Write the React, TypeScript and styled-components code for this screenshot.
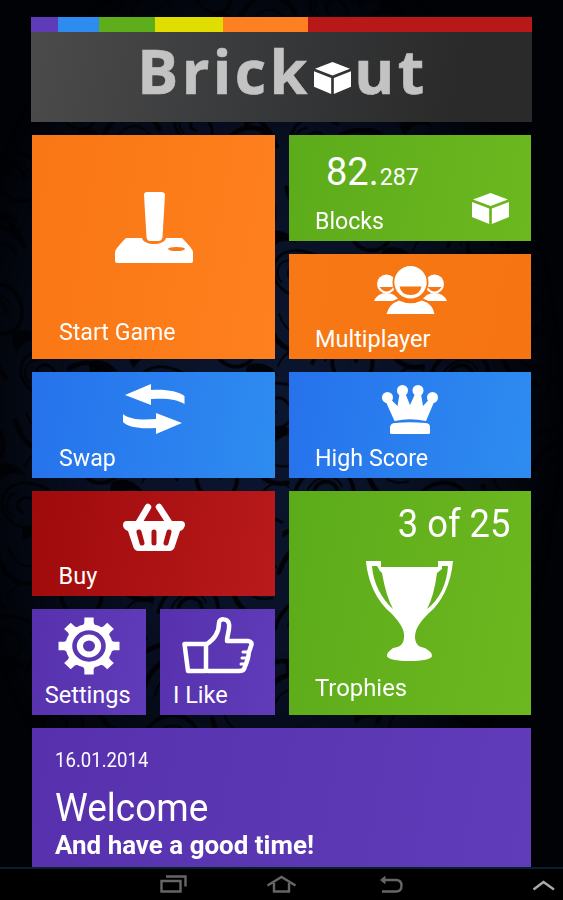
import React from "react";
import styled, { createGlobalStyle } from "styled-components";

const Global = createGlobalStyle`
  *{box-sizing:border-box}
  body{margin:0;background:#000;overflow:hidden}
`;

const Screen = styled.div`
  position:relative;width:563px;height:900px;overflow:hidden;
  display:flex;flex-direction:column;
  font-family:Roboto,sans-serif;color:#fff;background:#010205;
`;
const Backdrop = styled.svg`
  position:absolute;inset:0;width:100%;height:100%;
`;
const Content = styled.main`
  position:relative;height:867px;flex:none;overflow:hidden;
  padding:16.5px 31px 0 30.7px;
`;
const Header = styled.header`height:105.5px;`;
const Stripe = styled.div`
  height:15.5px;display:grid;
  grid-template-columns:27.7px 41px 56px 68px 85px 1fr;
`;
const Band = styled.span<{ $c: string }>`background:${p => p.$c};`;
const TitleBar = styled.div`
  height:90px;display:flex;justify-content:center;
  background:linear-gradient(100deg,#4b4b4c,#363738 50%,#2a2a2b 85%);
`;
const Title = styled.h1`
  margin:0;width:288px;display:flex;align-items:baseline;white-space:nowrap;
  font:700 61px/77px "Open Sans",sans-serif;color:#c3c3c3;letter-spacing:3.4px;
  -webkit-text-stroke:.6px #c3c3c3;
`;
const Word = styled.span<{ $w: number; $ml?: number }>`
  width:${p => p.$w}px;margin-left:${p => p.$ml ?? 0}px;
`;
const Grid = styled.div`
  margin:13.1px 0 0 1.6px;width:498.8px;display:grid;
  grid-template-columns:repeat(4,114.2px);
  grid-template-rows:repeat(5,105.9px) 150px;
  gap:12.6px 14px;
`;
const fills = {
  orange: "linear-gradient(100deg,#f97714,#ff801f)",
  deepOrange: "linear-gradient(100deg,#f77814,#f67512)",
  green: "linear-gradient(100deg,#5cab1a,#6cb820)",
  blue: "linear-gradient(100deg,#2672ec,#2e8cf0)",
  red: "linear-gradient(100deg,#9f0a0b,#b91a1b)",
  purple: "linear-gradient(100deg,#5731ad,#603cba)",
};
const Tile = styled.section<{ $fill: keyof typeof fills; $cols?: number; $rows?: number; $base?: number; $left?: number }>`
  grid-column:span ${p => p.$cols ?? 2};grid-row:span ${p => p.$rows ?? 1};
  background:${p => fills[p.$fill]};
  display:flex;flex-direction:column;overflow:hidden;
  padding:0 0 ${p => p.$base ?? 5}px ${p => p.$left ?? 26.3}px;
`;
const Icon = styled.svg<{ $w: number; $h: number; $top: number; $x: number }>`
  width:${p => p.$w}px;height:${p => p.$h}px;flex:none;
  margin:${p => p.$top}px 0 0 ${p => p.$x}px;fill:#fff;
`;
const Label = styled.div<{ $sx?: number }>`
  margin-top:auto;font-size:23.5px;line-height:30px;white-space:nowrap;
  transform:scaleX(${p => p.$sx ?? 1});transform-origin:0 0;
`;
const FootRow = styled.div`margin-top:auto;display:flex;`;
const Count = styled.div`
  font-size:38px;line-height:44px;margin:15px 0 0 11px;white-space:nowrap;
`;
const Small = styled.span`font-size:23.2px;margin-left:1px;`;
const Progress = styled.div`
  font-size:38.5px;line-height:44px;margin:11px 21px 0 0;align-self:flex-end;white-space:nowrap;
  transform:scaleX(.943);transform-origin:100% 0;
`;
const DateText = styled.div`
  font-size:19.5px;line-height:24px;margin-top:21.5px;
  transform:scaleX(.953);transform-origin:0 0;
`;
const Welcome = styled.div`
  font-size:38.8px;line-height:46px;margin-top:11.5px;
  transform:scaleX(.953);transform-origin:0 0;
`;
const Message = styled.div`
  font-size:25px;font-weight:700;line-height:30px;white-space:nowrap;
  transform:scaleX(1.038);transform-origin:0 0;
`;
const NavBar = styled.nav`
  position:relative;height:33px;border-top:2px solid #07202b;background:#000;
  display:flex;align-items:center;
`;
const NavIcon = styled.svg<{ $ml: number; $w?: number }>`
  width:${p => p.$w ?? 28}px;height:18px;flex:none;margin-left:${p => p.$ml}px;margin-top:-1px;
  fill:none;stroke:#666;stroke-width:2.4;
`;

const Cube = () => (
  <>
    <path d="M18 0 35 6.7 18 13.3 1 6.7Z" />
    <path d="M0 9.2 16.7 15.8V31.5L0 24.3Z" />
    <path d="M36 9.2 19.3 15.8V31.5L36 24.3Z" />
  </>
);

const Gear = () => (
  <g transform="translate(31 29)">
    {[0, 45, 90, 135, 180, 225, 270, 315].map(a => (
      <path key={a} transform={`rotate(${a})`} d="M-7-19-4.500-24V-29.500H4.500V-24L7-19Z" />
    ))}
    <circle r="19.5" fill="none" stroke="#fff" strokeWidth="6.5" />
    <circle r="8.8" fill="none" stroke="#fff" strokeWidth="6" />
  </g>
);

const Swirls = () => (
  <Backdrop viewBox="0 0 563 900">
    <defs>
      <pattern id="swirl" width="118" height="134" patternUnits="userSpaceOnUse" patternTransform="rotate(8)">
        <g fill="none" stroke="#010308" strokeLinecap="round">
          <path strokeWidth="4" d="M6 48C10 10 54 2 64 33S36 72 27 50s20-28 22-10" />
          <path strokeWidth="3" d="M116 76C78 62 60 92 80 110s40-3 26-18-26 8-12 10" />
          <path strokeWidth="5" d="M2 126c8-40 40-44 56-20M74 12c10 24 26 30 42 24M0 88c18-14 34-12 50 6" />
          <path strokeWidth="2" d="M14 132c3-27 24-34 38-16M84 4c8 16 20 20 34 14M90 56c4-16 16-22 28-16M18 44c4-20 26-26 34-12M86 84c-12 2-12 16-4 22" />
        </g>
        <path d="M60 60C70 52 86 56 92 66 80 62 70 66 66 78 60 74 58 66 60 60ZM20 78C30 72 44 76 50 84 38 84 30 86 24 92ZM96 118C106 112 114 116 118 122 108 122 102 126 98 132Z" fill="#010308" />
      </pattern>
      <radialGradient id="glow" cx=".46" cy=".46" r=".54">
        <stop offset="0" stopColor="#fff" stopOpacity="1" />
        <stop offset=".5" stopColor="#fff" stopOpacity=".75" />
        <stop offset=".8" stopColor="#fff" stopOpacity=".3" />
        <stop offset="1" stopColor="#fff" stopOpacity="0" />
      </radialGradient>
      <mask id="fade"><rect width="563" height="900" fill="url(#glow)" /></mask>
    </defs>
    <g mask="url(#fade)">
      <rect width="563" height="900" fill="#0b1630" />
      <rect width="563" height="900" fill="url(#swirl)" />
    </g>
  </Backdrop>
);

export default function App() {
  return (
    <Screen>
      <Global />
      <Swirls />
      <Content>
        <Header>
          <Stripe>
            {["#603bb8", "#2e8bef", "#5eae1b", "#e0dd00", "#ff8020", "#b81818"].map(c => <Band key={c} $c={c} />)}
          </Stripe>
          <TitleBar>
            <Title>
              <Word $w={177}>Brick</Word>
              <Icon $w={37} $h={32} $top={0} $x={0} viewBox="0 0 36 31.5" preserveAspectRatio="none"><Cube /></Icon>
              <Word $w={70} $ml={3}>ut</Word>
            </Title>
          </TitleBar>
        </Header>
        <Grid>
          <Tile $fill="orange" $rows={2} $base={12}>
            <Icon $w={78} $h={71} $top={57} $x={56} viewBox="0 0 78 71">
              <path d="M29 3Q29 0 32 0H46Q50 0 50 3L47.5 45Q47 49 43 49H35Q32 49 31.5 45Z" />
              <path d="M11 46H27C29 54 49 54 51 46H67Q78 57 78 60V69Q78 71 76 71H2Q0 71 0 69V60Q0 57 11 46Z" />
              <ellipse cx="61.5" cy="57" rx="8.5" ry="2" fill="#f97818" />
            </Icon>
            <Label $sx={.985}>Start Game</Label>
          </Tile>
          <Tile $fill="green">
            <Count>82.<Small>287</Small></Count>
            <FootRow>
              <Label $sx={.985}>Blocks</Label>
              <Icon $w={37} $h={31} $top={-12.5} $x={87} viewBox="0 0 36 31.5" preserveAspectRatio="none"><Cube /></Icon>
            </FootRow>
          </Tile>
          <Tile $fill="deepOrange">
            <Icon $w={73} $h={48} $top={12.5} $x={58.7} viewBox="0 0 73 48">
              {[12.5, 60.5].map(x => (
                <g key={x}>
                  <circle cx={x} cy="18" r="9.5" />
                  <path d={`M${x - 12.5} 35Q${x - 9} 27 ${x} 27T${x + 12.5} 35Z`} />
                  <path d={`M${x - 7} 21H${x + 7}Q${x} 30 ${x - 7} 21Z`} fill="#f67613" />
                </g>
              ))}
              <circle cx="36.5" cy="16.5" r="18" fill="#f67613" />
              <path d="M10.5 49Q12 31 36.5 31T62.5 49Z" fill="#f67613" />
              <circle cx="36.5" cy="16.2" r="16.2" />
              <path d="M25.5 20.5H47.5Q46 29 36.5 29T25.5 20.5Z" fill="#f67613" />
              <path d="M12.5 48Q15 38 25 34.5 36.5 40 48 34.5 59 38 60.5 48Z" />
            </Icon>
            <Label>Multiplayer</Label>
          </Tile>
          <Tile $fill="blue">
            <Icon $w={63} $h={50} $top={12} $x={64.2} viewBox="0 0 63 50">
              <path d="M2 11 28 0V6C42 5 55 7 61.5 12V20C54 15 43 14 28 15V21Z" />
              <path d="M0 30C7 36 20 36 33 35V29L59 39 33 50V44C15 45 5 43 0 38Z" />
            </Icon>
            <Label $sx={.985}>Swap</Label>
          </Tile>
          <Tile $fill="blue">
            <Icon $w={56} $h={49} $top={12.5} $x={66.7} viewBox="0 0 56 49">
              <circle cx="5.5" cy="12.5" r="5.5" /><circle cx="20.5" cy="5.5" r="5.5" /><circle cx="36" cy="5.5" r="5.5" /><circle cx="50.5" cy="12.5" r="5.5" />
              <path d="M3.500 16 8.500 14 15.500 21 17.500 9H23.500L28 20 33 9H39L41 21 47.500 14 52.500 16 44 36Q28 32.500 12.500 36Z" />
              <path d="M8 48V42Q9 38 13 38 28 36.5 43 38 48 38 48 42V48Q48 49 46 49H10Q8 49 8 48Z" />
            </Icon>
            <Label $sx={.99}>High Score</Label>
          </Tile>
          <Tile $fill="red">
            <Icon $w={62} $h={48} $top={12.5} $x={64.2} viewBox="0 0 62 48">
              <path d="M25 4 15 21M36 4 47 21" fill="none" stroke="#fff" strokeWidth="6.5" strokeLinecap="round" />
              <path d="M4 18H58Q62 18 62 22 61 27 57 28L52 43Q51 48 46 48H16Q11 48 10 43L5 28Q0 26 0 22 0 18 4 18Z" />
              <path d="M16 29 19 40M31 29V40M46 29 43 40" fill="none" stroke="#ad1112" strokeWidth="5" strokeLinecap="round" />
            </Icon>
            <Label>Buy</Label>
          </Tile>
          <Tile $fill="green" $rows={2} $base={12}>
            <Progress>3 of 25</Progress>
            <Icon $w={87} $h={100} $top={15} $x={51.2} viewBox="0 0 87 100">
              <path d="M0 0H15V6H72V0H87C85 24 75 42 63 52 53 62 49 68 49 77 50 84 53 86 59 87 63 90 66 91 66 95 66 98 56 100 43.500 100S21 98 21 95C21 91 24 90 27 87 34 86 37 84 38 77 39 68 34 62 25 52 13 42 2 24 0 0Z" />
              <path d="M6 5H11L14 10 16 12Q20 35 27 48C16 38 7 22 6 5ZM82 5H76V8L71 12Q68 35 61 48C74 38 81 22 82 5Z" fill="#61b01c" />
            </Icon>
            <Label $sx={1.015}>Trophies</Label>
          </Tile>
          <Tile $fill="purple" $cols={1} $left={12.5}>
            <Icon $w={62} $h={58} $top={8} $x={13.5} viewBox="1 -1 60 60" preserveAspectRatio="none"><Gear /></Icon>
            <Label>Settings</Label>
          </Tile>
          <Tile $fill="purple" $cols={1} $left={12.5}>
            <Icon $w={72} $h={57} $top={8} $x={9} viewBox="0 0 72 57">
              <g fill="none" stroke="#fff" strokeWidth="4.5" strokeLinejoin="round" strokeLinecap="round">
                <path d="M2.500 27H24V54H6Z" />
                <path d="M25 27C31 23 37 17 37 6 37 1 46 1 47 7 48 13 45 18 45 24H66Q71 25 69 29L67 35 66 41 64 47 62 52Q61 54 57 54H26" />
                <path d="M67 35H61M66 41H60M64 47H59" strokeWidth="3" />
              </g>
            </Icon>
            <Label>I Like</Label>
          </Tile>
          <Tile $fill="purple" $cols={4} $left={22.5}>
            <DateText>16.01.2014</DateText>
            <Welcome>Welcome</Welcome>
            <Message>And have a good time!</Message>
          </Tile>
        </Grid>
      </Content>
      <NavBar>
        <NavIcon $ml={159} viewBox="0 0 28 18"><path d="M2.500 6H21.500V16.500H2.500ZM7 1.500H26.500V11.500" /></NavIcon>
        <NavIcon $ml={79} $w={31} viewBox="0 0 31 18"><path d="M1.500 10.500 15.500 2 29.500 10.500M8 8V16.500H23V8" /></NavIcon>
        <NavIcon $ml={81} viewBox="0 0 28 18"><path d="M4 5H18Q23.500 5 23.500 10.700T18 16.500H4" /><path d="M7 1.500 2.500 5 7 8.500Z" fill="#666" strokeWidth="1" /></NavIcon>
        <NavIcon $ml={123} viewBox="0 0 28 18"><path d="M4.500 14.500 14.500 7 25 14.500" stroke="#aaa" /></NavIcon>
      </NavBar>
    </Screen>
  );
}
